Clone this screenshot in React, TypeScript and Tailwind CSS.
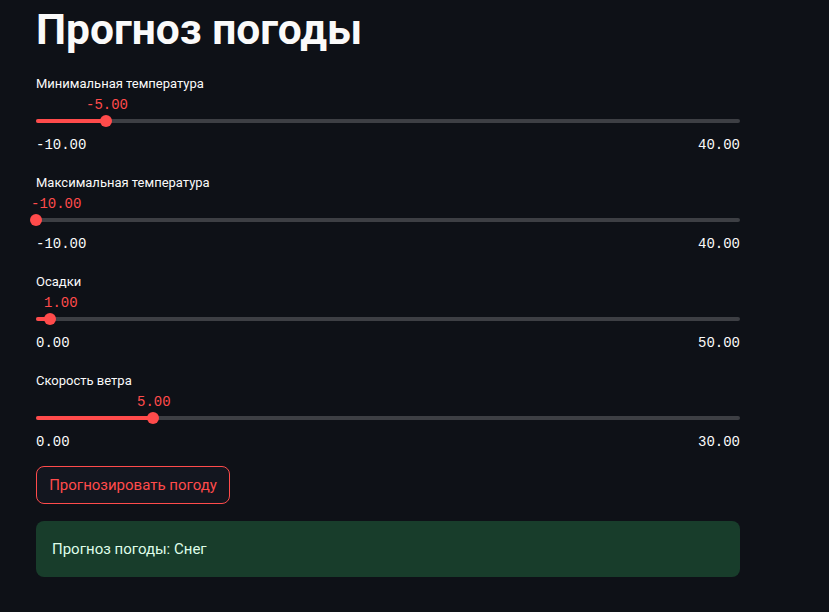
const sans = "font-['Roboto','Liberation_Sans',sans-serif]";
const mono = "font-['Liberation_Mono','DejaVu_Sans_Mono',monospace]";

type Slider = { label: string; min: number; max: number; value: number; labelLeft: number };

const sliders: Slider[] = [
  { label: "Минимальная температура", min: -10, max: 40, value: -5, labelLeft: 50 },
  { label: "Максимальная температура", min: -10, max: 40, value: -10, labelLeft: -5 },
  { label: "Осадки", min: 0, max: 50, value: 1, labelLeft: 8 },
  { label: "Скорость ветра", min: 0, max: 30, value: 5, labelLeft: 101 },
];

function SliderRow({ s }: { s: Slider }) {
  const pct = ((s.value - s.min) / (s.max - s.min)) * 100;
  return (
    <div className="flex flex-col">
      <label className={`h-[20px] text-[13px] leading-[20px] text-[#fafafa] ${sans}`}>{s.label}</label>
      <div className="relative h-[41px]">
        <div
          className={`absolute top-[3px] text-[14px] leading-[16px] text-[#ff4b4b] ${mono}`}
          style={{ left: s.labelLeft }}
        >
          {s.value.toFixed(2)}
        </div>
        <div className="absolute left-0 right-0 top-[25px] h-[4px] rounded-full bg-[#3d3f44]">
          <div className="h-full rounded-full bg-[#ff4b4b]" style={{ width: `${pct}%` }} />
        </div>
        <div
          className="absolute top-[21px] h-[12px] w-[12px] -translate-x-1/2 rounded-full bg-[#ff4b4b]"
          style={{ left: `${pct}%` }}
        />
      </div>
      <div className={`flex h-[20px] justify-between text-[14px] leading-[20px] text-[#fafafa] ${mono}`}>
        <span>{s.min.toFixed(2)}</span>
        <span>{s.max.toFixed(2)}</span>
      </div>
    </div>
  );
}

export default function App() {
  return (
    <div className="h-[612px] w-[829px] overflow-hidden bg-[#0e1117]">
      <div className="ml-[36px] flex w-[704px] flex-col">
        <h1 className={`h-[60px] text-[42.5px] font-bold leading-[60px] text-[#fafafa] ${sans}`}>Прогноз погоды</h1>
        <div className="mt-[14px] flex flex-col gap-[18px]">
          {sliders.map((s) => (
            <SliderRow key={s.label} s={s} />
          ))}
        </div>
        <button
          className={`mt-[14px] h-[38px] w-[194px] rounded-[8px] border border-[#ff4b4b] bg-[#13161f] text-[15px] text-[#ff4b4b] ${sans}`}
        >
          Прогнозировать погоду
        </button>
        <div
          className={`mt-[17px] flex h-[56px] items-center rounded-[8px] bg-[#183d2b] px-[16px] text-[15px] text-[#dffde9] ${sans}`}
        >
          Прогноз погоды: Снег
        </div>
      </div>
    </div>
  );
}
